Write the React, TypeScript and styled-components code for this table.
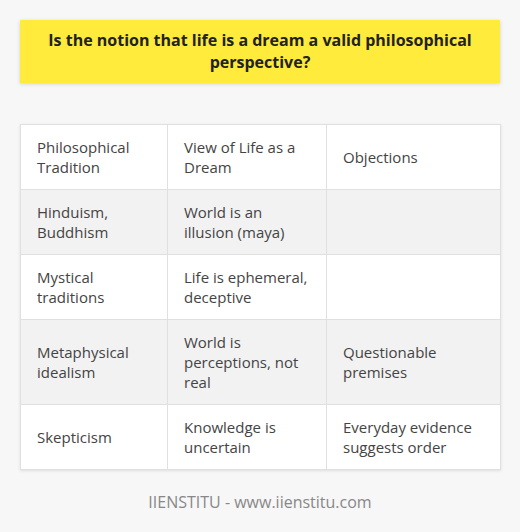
import * as React from 'react'
import styled, { createGlobalStyle } from 'styled-components';

const GlobalStyle = createGlobalStyle`
  html, body {
    margin: 0;
    padding: 0;
    background: #f7f7f7;
  }
  body {
    font-family: "Open Sans", "Liberation Sans", sans-serif;
  }
`;

const Page = styled.div`
  width: 520px;
  height: 532px;
  box-sizing: border-box;
  padding: 20px 20px 0;
  display: flex;
  flex-direction: column;
`;

const TitleBox = styled.div`
  background-color: #ffeb3b;
  box-shadow: 0 1px 4px rgba(0, 0, 0, 0.15);
  padding: 10px 24px;
  text-align: center;
`;

const Title = styled.h1`
  margin: 0;
  font-size: 16px;
  line-height: 21.5px;
  font-weight: 700;
  color: #222;
`;

const Table = styled.table`
  margin-top: 41px;
  width: 480px;
  border-collapse: collapse;
  background: #fff;
  box-shadow: 0 1px 3px rgba(0, 0, 0, 0.1);
  table-layout: fixed;
`;

const Row = styled.tr<{ $striped?: boolean }>`
  background-color: ${p => (p.$striped ? '#f2f2f2' : '#fff')};
`;

const Cell = styled.td`
  border: 1px solid #e0e0e0;
  padding: 12px 15px 12px 16px;
  font-size: 15px;
  line-height: 20px;
  color: #444;
  vertical-align: middle;
  text-align: left;
`;

const Footer = styled.div`
  margin-top: 21px;
  text-align: center;
  font-size: 16px;
  line-height: 22px;
  color: #888;
`;

const rows: string[][] = [
  ['Hinduism, Buddhism', 'World is an illusion (maya)', ''],
  ['Mystical traditions', 'Life is ephemeral, deceptive', ''],
  ['Metaphysical idealism', 'World is perceptions, not real', 'Questionable premises'],
  ['Skepticism', 'Knowledge is uncertain', 'Everyday evidence suggests order'],
];

export default function App() {
  return <>
    <GlobalStyle />
    <Page>
      <TitleBox>
        <Title>Is the notion that life is a dream a valid philosophical perspective?</Title>
      </TitleBox>
      <Table>
        <colgroup>
          <col style={{ width: 147 }} />
          <col style={{ width: 159 }} />
          <col style={{ width: 174 }} />
        </colgroup>
        <tbody>
          <Row>
            <Cell>Philosophical Tradition</Cell>
            <Cell>View of Life as a Dream</Cell>
            <Cell>Objections</Cell>
          </Row>
          {rows.map((r, i) => (
            <Row key={i} $striped={i % 2 === 0}>
              {r.map((c, j) => <Cell key={j}>{c}</Cell>)}
            </Row>
          ))}
        </tbody>
      </Table>
      <Footer>IIENSTITU - www.iienstitu.com</Footer>
    </Page>
  </>
}
